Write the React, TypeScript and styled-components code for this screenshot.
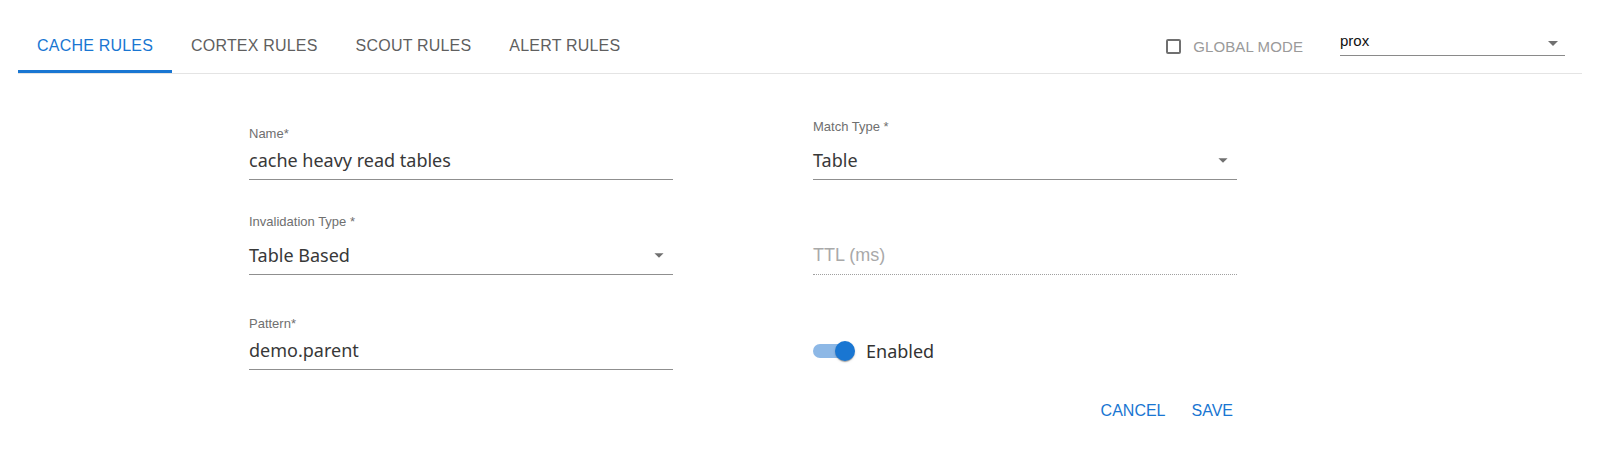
import * as React from 'react';
import { createGlobalStyle, styled } from 'styled-components';

const GlobalStyle = createGlobalStyle`
  html, body {
    margin: 0;
    padding: 0;
    background: #ffffff;
    font-family: "Liberation Sans", Arial, sans-serif;
  }
`;

const Page = styled.div`
  width: 1600px;
  min-height: 458px;
  background: #ffffff;
`;

const Header = styled.div`
  display: flex;
  align-items: flex-start;
  margin: 0 18px;
  padding-top: 22px;
  border-bottom: 1px solid #e4e4e4;
`;

const TabList = styled.div`
  display: flex;
`;

const Tab = styled.button<{ $active?: boolean }>`
  height: 51px;
  padding: 0 19px;
  display: flex;
  align-items: center;
  background: transparent;
  border: none;
  border-bottom: 3px solid ${(p) => (p.$active ? '#1976d2' : 'transparent')};
  color: ${(p) => (p.$active ? '#1976d2' : '#5f5f5f')};
  font-family: "Liberation Sans", Arial, sans-serif;
  font-size: 16px;
  letter-spacing: 0.2px;
  text-transform: uppercase;
  cursor: pointer;
`;

const Tools = styled.div`
  margin-left: auto;
  margin-right: 17px;
  height: 48px;
  display: flex;
  align-items: center;
`;

const GlobalToggle = styled.label`
  display: flex;
  align-items: center;
  gap: 12px;
  color: #9a9a9a;
  font-size: 15px;
  letter-spacing: 0.1px;
  text-transform: uppercase;
  cursor: pointer;
`;

const CheckBox = styled.span`
  width: 11px;
  height: 11px;
  border: 2px solid #707070;
  border-radius: 2px;
`;

const HeaderSelect = styled.div`
  align-self: flex-start;
  margin-top: 9px;
  margin-left: 37px;
  width: 225px;
  height: 24px;
  display: flex;
  align-items: flex-start;
  justify-content: space-between;
  border-bottom: 1px solid #8a8a8a;
  color: #111111;
  font-size: 15px;
  line-height: 20px;
`;

const Form = styled.div`
  width: 988px;
  margin-left: 249px;
  padding-top: 44px;
`;

const Grid = styled.div`
  display: grid;
  grid-template-columns: 424px 424px;
  grid-auto-rows: 62px;
  column-gap: 140px;
  row-gap: 33px;
  align-items: end;
`;

const Field = styled.div`
  display: flex;
  flex-direction: column;
`;

const Label = styled.div<{ $select?: boolean }>`
  color: #6f6f6f;
  font-size: 13px;
  line-height: 16px;
  margin-bottom: ${(p) => (p.$select ? '10px' : '3px')};
`;

const InputLine = styled.div<{ $disabled?: boolean }>`
  display: flex;
  align-items: center;
  justify-content: space-between;
  padding: 3px 0 7px;
  border-bottom: 1px ${(p) => (p.$disabled ? 'dotted #a0a0a0' : 'solid #8f8f8f')};
  color: #383838;
  font-family: "Noto Sans", "Open Sans", sans-serif;
  font-size: 18px;
  line-height: 24px;
`;

const Placeholder = styled.span`
  color: #a9a9a9;
  font-family: "Liberation Sans", Arial, sans-serif;
  font-size: 18px;
`;

const ArrowIcon = styled.svg<{ $size: number; $inset: number }>`
  width: ${(p) => p.$size}px;
  height: ${(p) => p.$size}px;
  margin-right: ${(p) => p.$inset}px;
  fill: #707070;
  flex-shrink: 0;
`;

const SwitchLabel = styled.label`
  display: flex;
  align-items: center;
  margin-left: -7px;
  height: 38px;
  color: #333333;
  font-family: "Noto Sans", "Open Sans", sans-serif;
  font-size: 18px;
  cursor: pointer;
`;

const SwitchRoot = styled.span`
  position: relative;
  width: 58px;
  height: 38px;
  flex-shrink: 0;
  margin-right: 2px;
`;

const SwitchTrack = styled.span<{ $on: boolean }>`
  position: absolute;
  left: 7px;
  top: 12px;
  width: 38px;
  height: 14px;
  border-radius: 7px;
  background: ${(p) => (p.$on ? '#8db8e6' : '#bdbdbd')};
`;

const SwitchThumb = styled.span<{ $on: boolean }>`
  position: absolute;
  top: 9px;
  left: ${(p) => (p.$on ? '29px' : '9px')};
  width: 20px;
  height: 20px;
  border-radius: 50%;
  background: ${(p) => (p.$on ? '#1976d2' : '#fafafa')};
  box-shadow: 0 2px 1px -1px rgba(0, 0, 0, 0.2), 0 1px 1px 0 rgba(0, 0, 0, 0.14), 0 1px 3px 0 rgba(0, 0, 0, 0.12);
`;

const Actions = styled.div`
  display: flex;
  justify-content: flex-end;
  gap: 10px;
  margin-top: 23px;
  margin-right: -4px;
`;

const TextButton = styled.button`
  padding: 6px 8px;
  background: transparent;
  border: none;
  color: #1976d2;
  font-family: "Liberation Sans", Arial, sans-serif;
  font-size: 16px;
  line-height: 24px;
  text-transform: uppercase;
  cursor: pointer;
`;

const DropArrow = ({ size, inset = 0 }: { size: number; inset?: number }) => (
  <ArrowIcon $size={size} $inset={inset} viewBox="0 0 24 24">
    <path d="M7 10l5 5 5-5z" />
  </ArrowIcon>
);

const tabs = ['Cache Rules', 'Cortex Rules', 'Scout Rules', 'Alert Rules'];

export default function App() {
  const [active, setActive] = React.useState(0);
  const [enabled, setEnabled] = React.useState(true);

  return (
    <Page>
      <GlobalStyle />
      <Header>
        <TabList>
          {tabs.map((t, i) => (
            <Tab key={t} $active={i === active} onClick={() => setActive(i)}>
              {t}
            </Tab>
          ))}
        </TabList>
        <Tools>
          <GlobalToggle>
            <CheckBox />
            Global Mode
          </GlobalToggle>
          <HeaderSelect>
            <span>prox</span>
            <DropArrow size={24} />
          </HeaderSelect>
        </Tools>
      </Header>

      <Form>
        <Grid>
          <Field>
            <Label>Name*</Label>
            <InputLine>cache heavy read tables</InputLine>
          </Field>
          <Field>
            <Label $select>Match Type *</Label>
            <InputLine>
              <span>Table</span>
              <DropArrow size={22} inset={3} />
            </InputLine>
          </Field>
          <Field>
            <Label $select>Invalidation Type *</Label>
            <InputLine>
              <span>Table Based</span>
              <DropArrow size={22} inset={3} />
            </InputLine>
          </Field>
          <Field>
            <InputLine $disabled>
              <Placeholder>TTL (ms)</Placeholder>
            </InputLine>
          </Field>
          <Field>
            <Label>Pattern*</Label>
            <InputLine>demo.parent</InputLine>
          </Field>
          <Field>
            <SwitchLabel onClick={() => setEnabled((v) => !v)}>
              <SwitchRoot>
                <SwitchTrack $on={enabled} />
                <SwitchThumb $on={enabled} />
              </SwitchRoot>
              Enabled
            </SwitchLabel>
          </Field>
        </Grid>
        <Actions>
          <TextButton type="button">Cancel</TextButton>
          <TextButton type="button">Save</TextButton>
        </Actions>
      </Form>
    </Page>
  );
}
